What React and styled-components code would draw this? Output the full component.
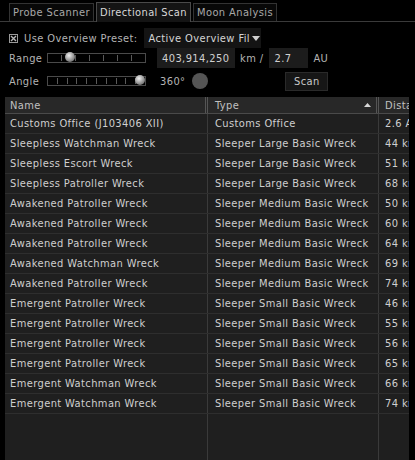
import React from "react";
import styled, { createGlobalStyle } from "styled-components";

const GlobalStyle = createGlobalStyle`
  html, body {
    margin: 0;
    padding: 0;
    background: #000;
  }
  body {
    font-family: "DejaVu Sans Condensed", "DejaVu Sans", sans-serif;
    font-size: 11px;
    color: #c4c4c4;
  }
`;

const rows = [
  ["Customs Office (J103406 XII)", "Customs Office", "2.6 AU"],
  ["Sleepless Watchman Wreck", "Sleeper Large Basic Wreck", "44 km"],
  ["Sleepless Escort Wreck", "Sleeper Large Basic Wreck", "51 km"],
  ["Sleepless Patroller Wreck", "Sleeper Large Basic Wreck", "68 km"],
  ["Awakened Patroller Wreck", "Sleeper Medium Basic Wreck", "50 km"],
  ["Awakened Patroller Wreck", "Sleeper Medium Basic Wreck", "60 km"],
  ["Awakened Patroller Wreck", "Sleeper Medium Basic Wreck", "64 km"],
  ["Awakened Watchman Wreck", "Sleeper Medium Basic Wreck", "69 km"],
  ["Awakened Patroller Wreck", "Sleeper Medium Basic Wreck", "74 km"],
  ["Emergent Patroller Wreck", "Sleeper Small Basic Wreck", "46 km"],
  ["Emergent Patroller Wreck", "Sleeper Small Basic Wreck", "55 km"],
  ["Emergent Patroller Wreck", "Sleeper Small Basic Wreck", "56 km"],
  ["Emergent Patroller Wreck", "Sleeper Small Basic Wreck", "65 km"],
  ["Emergent Watchman Wreck", "Sleeper Small Basic Wreck", "66 km"],
  ["Emergent Watchman Wreck", "Sleeper Small Basic Wreck", "74 km"],
];

function Slider({ value, ticks }) {
  return (
    <StyledTrack>
      {Array.from({ length: ticks }).map((_, i) => (
        <StyledTick key={i} />
      ))}
      <StyledKnob style={{ left: `${value}%` }} />
    </StyledTrack>
  );
}

function App() {
  return (
    <>
      <GlobalStyle />
      <StyledWindow>
        <StyledTabBar>
          <StyledTab>Probe Scanner</StyledTab>
          <StyledTab active>Directional Scan</StyledTab>
          <StyledTab>Moon Analysis</StyledTab>
        </StyledTabBar>

        <StyledControls>
          <StyledRow>
            <StyledCheck>
              <svg width="9" height="9" viewBox="0 0 9 9">
                <rect x="0.5" y="0.5" width="8" height="8" fill="none" stroke="#9a9a9a" />
                <path d="M2 2 L7 7 M7 2 L2 7" stroke="#b5b5b5" strokeWidth="1.4" />
              </svg>
            </StyledCheck>
            <StyledLabel>Use Overview Preset:</StyledLabel>
            <StyledSelect>
              Active Overview Fil
              <svg width="8" height="5" viewBox="0 0 8 5">
                <path d="M0 0 H8 L4 5 Z" fill="#d0d0d0" />
              </svg>
            </StyledSelect>
          </StyledRow>

          <StyledRow>
            <StyledFieldLabel>Range</StyledFieldLabel>
            <Slider value={23} ticks={6} />
            <StyledInput width={78}>403,914,250</StyledInput>
            <StyledLabel>km /</StyledLabel>
            <StyledInput width={39}>2.7</StyledInput>
            <StyledLabel>AU</StyledLabel>
          </StyledRow>

          <StyledRow spaced>
            <StyledFieldLabel>Angle</StyledFieldLabel>
            <Slider value={95} ticks={9} />
            <StyledLabel style={{ marginLeft: 3 }}>360°</StyledLabel>
            <StyledDot />
            <StyledButton>Scan</StyledButton>
          </StyledRow>
        </StyledControls>

        <StyledTable>
          <StyledHeader>
            <StyledHeadCell>Name</StyledHeadCell>
            <StyledHeadCell>
              Type
              <svg width="7" height="4" viewBox="0 0 7 4">
                <path d="M0 4 H7 L3.5 0 Z" fill="#d8d8d8" />
              </svg>
            </StyledHeadCell>
            <StyledHeadCell>Distance</StyledHeadCell>
          </StyledHeader>
          {rows.map((r, i) => (
            <StyledDataRow key={i}>
              <StyledCell>{r[0]}</StyledCell>
              <StyledCell>{r[1]}</StyledCell>
              <StyledCell>{r[2]}</StyledCell>
            </StyledDataRow>
          ))}
          <StyledFiller>
            <span />
            <span />
            <span />
          </StyledFiller>
        </StyledTable>
      </StyledWindow>
    </>
  );
}

const StyledWindow = styled.div`
  width: 415px;
  height: 460px;
  background: #000;
  display: flex;
  flex-direction: column;
  overflow: hidden;
  letter-spacing: 0.4px;
`;

const StyledTabBar = styled.div`
  display: flex;
  align-items: flex-end;
  gap: 2px;
  height: 22px;
  padding-left: 9px;
  border-bottom: 1px solid #3a3a3a;
  box-sizing: border-box;
`;

const StyledTab = styled.div`
  height: ${(p) => (p.active ? "20px" : "18px")};
  padding: 0 3px;
  box-sizing: border-box;
  display: flex;
  align-items: center;
  border: 1px solid ${(p) => (p.active ? "#4a4a4a" : "#333")};
  border-bottom: none;
  background: ${(p) => (p.active ? "#141414" : "#080808")};
  color: ${(p) => (p.active ? "#d8d8d8" : "#a8a8a8")};
  margin-bottom: ${(p) => (p.active ? "-1px" : "0")};
`;

const StyledControls = styled.div`
  display: flex;
  flex-direction: column;
  padding: 6px 0 0 9px;
`;

const StyledRow = styled.div`
  display: flex;
  align-items: center;
  height: 20px;
  margin-top: ${(p) => (p.spaced ? "3px" : "0")};
`;

const StyledCheck = styled.span`
  display: flex;
  margin-right: 6px;
`;

const StyledLabel = styled.span`
  color: #b4b4b4;
  margin-right: 6px;
  white-space: nowrap;
`;

const StyledFieldLabel = styled.span`
  width: 38px;
  color: #b4b4b4;
`;

const StyledSelect = styled.div`
  margin-left: auto;
  margin-right: 154px;
  width: 119px;
  height: 20px;
  box-sizing: border-box;
  padding: 0 4px 0 5px;
  display: flex;
  align-items: center;
  justify-content: space-between;
  background: #141414;
  color: #d4d4d4;
  white-space: nowrap;
  overflow: hidden;
  svg {
    margin-left: 2px;
    flex: none;
  }
`;

const StyledTrack = styled.div`
  position: relative;
  width: 99px;
  height: 10px;
  border: 1px solid #4a4a4a;
  box-sizing: border-box;
  display: flex;
  justify-content: space-evenly;
  align-items: center;
  margin-right: 11px;
`;

const StyledTick = styled.span`
  width: 1px;
  height: 6px;
  background: #5a5a5a;
`;

const StyledKnob = styled.span`
  position: absolute;
  top: -2px;
  width: 10px;
  height: 10px;
  margin-left: -5px;
  border-radius: 50%;
  background: radial-gradient(circle at 40% 35%, #f0f0f0, #8a8a8a 60%, #4a4a4a);
`;

const StyledInput = styled.div`
  width: ${(p) => p.width}px;
  height: 20px;
  box-sizing: border-box;
  padding-left: 5px;
  display: flex;
  align-items: center;
  background: #1c1c1c;
  color: #d0d0d0;
  margin-right: 5px;
`;

const StyledDot = styled.span`
  width: 16px;
  height: 16px;
  border-radius: 50%;
  background: #555;
  margin-left: 1px;
`;

const StyledButton = styled.div`
  margin-left: 77px;
  width: 43px;
  height: 19px;
  box-sizing: border-box;
  display: flex;
  align-items: center;
  justify-content: center;
  background: #161616;
  border: 1px solid #2a2a2a;
  color: #c8c8c8;
`;

const cols = "203px 171px 1fr";

const StyledTable = styled.div`
  margin: 6px 6px 0 5px;
  flex: 1;
  display: flex;
  flex-direction: column;
  background: #1f1f1f;
  overflow: hidden;
`;

const StyledHeader = styled.div`
  display: grid;
  grid-template-columns: ${cols};
  height: 17px;
  box-sizing: border-box;
  background: #282828;
  border-bottom: 1px solid #4a4a4a;
`;

const StyledHeadCell = styled.div`
  display: flex;
  align-items: center;
  justify-content: space-between;
  padding: 0 5px;
  color: #c0c0c0;
  border-right: 3px double #555;
  white-space: nowrap;
  overflow: hidden;
  &:nth-child(2) {
    padding-left: 7px;
  }
  &:last-child {
    border-right: none;
    padding-left: 6px;
  }
`;

const StyledDataRow = styled.div`
  display: grid;
  grid-template-columns: ${cols};
  height: 20px;
  border-bottom: 1px solid #2e2e2e;
  box-sizing: border-box;
`;

const StyledCell = styled.div`
  display: flex;
  align-items: center;
  padding: 0 5px;
  color: #cfcfcf;
  white-space: nowrap;
  overflow: hidden;
  border-right: 1px solid #3a3a3a;
  &:nth-child(2) {
    padding-left: 7px;
  }
  &:last-child {
    border-right: none;
    padding-left: 6px;
  }
`;

const StyledFiller = styled.div`
  flex: 1;
  display: grid;
  grid-template-columns: ${cols};
  span {
    border-right: 1px solid #3a3a3a;
  }
  span:last-child {
    border-right: none;
  }
`;

export default App;
